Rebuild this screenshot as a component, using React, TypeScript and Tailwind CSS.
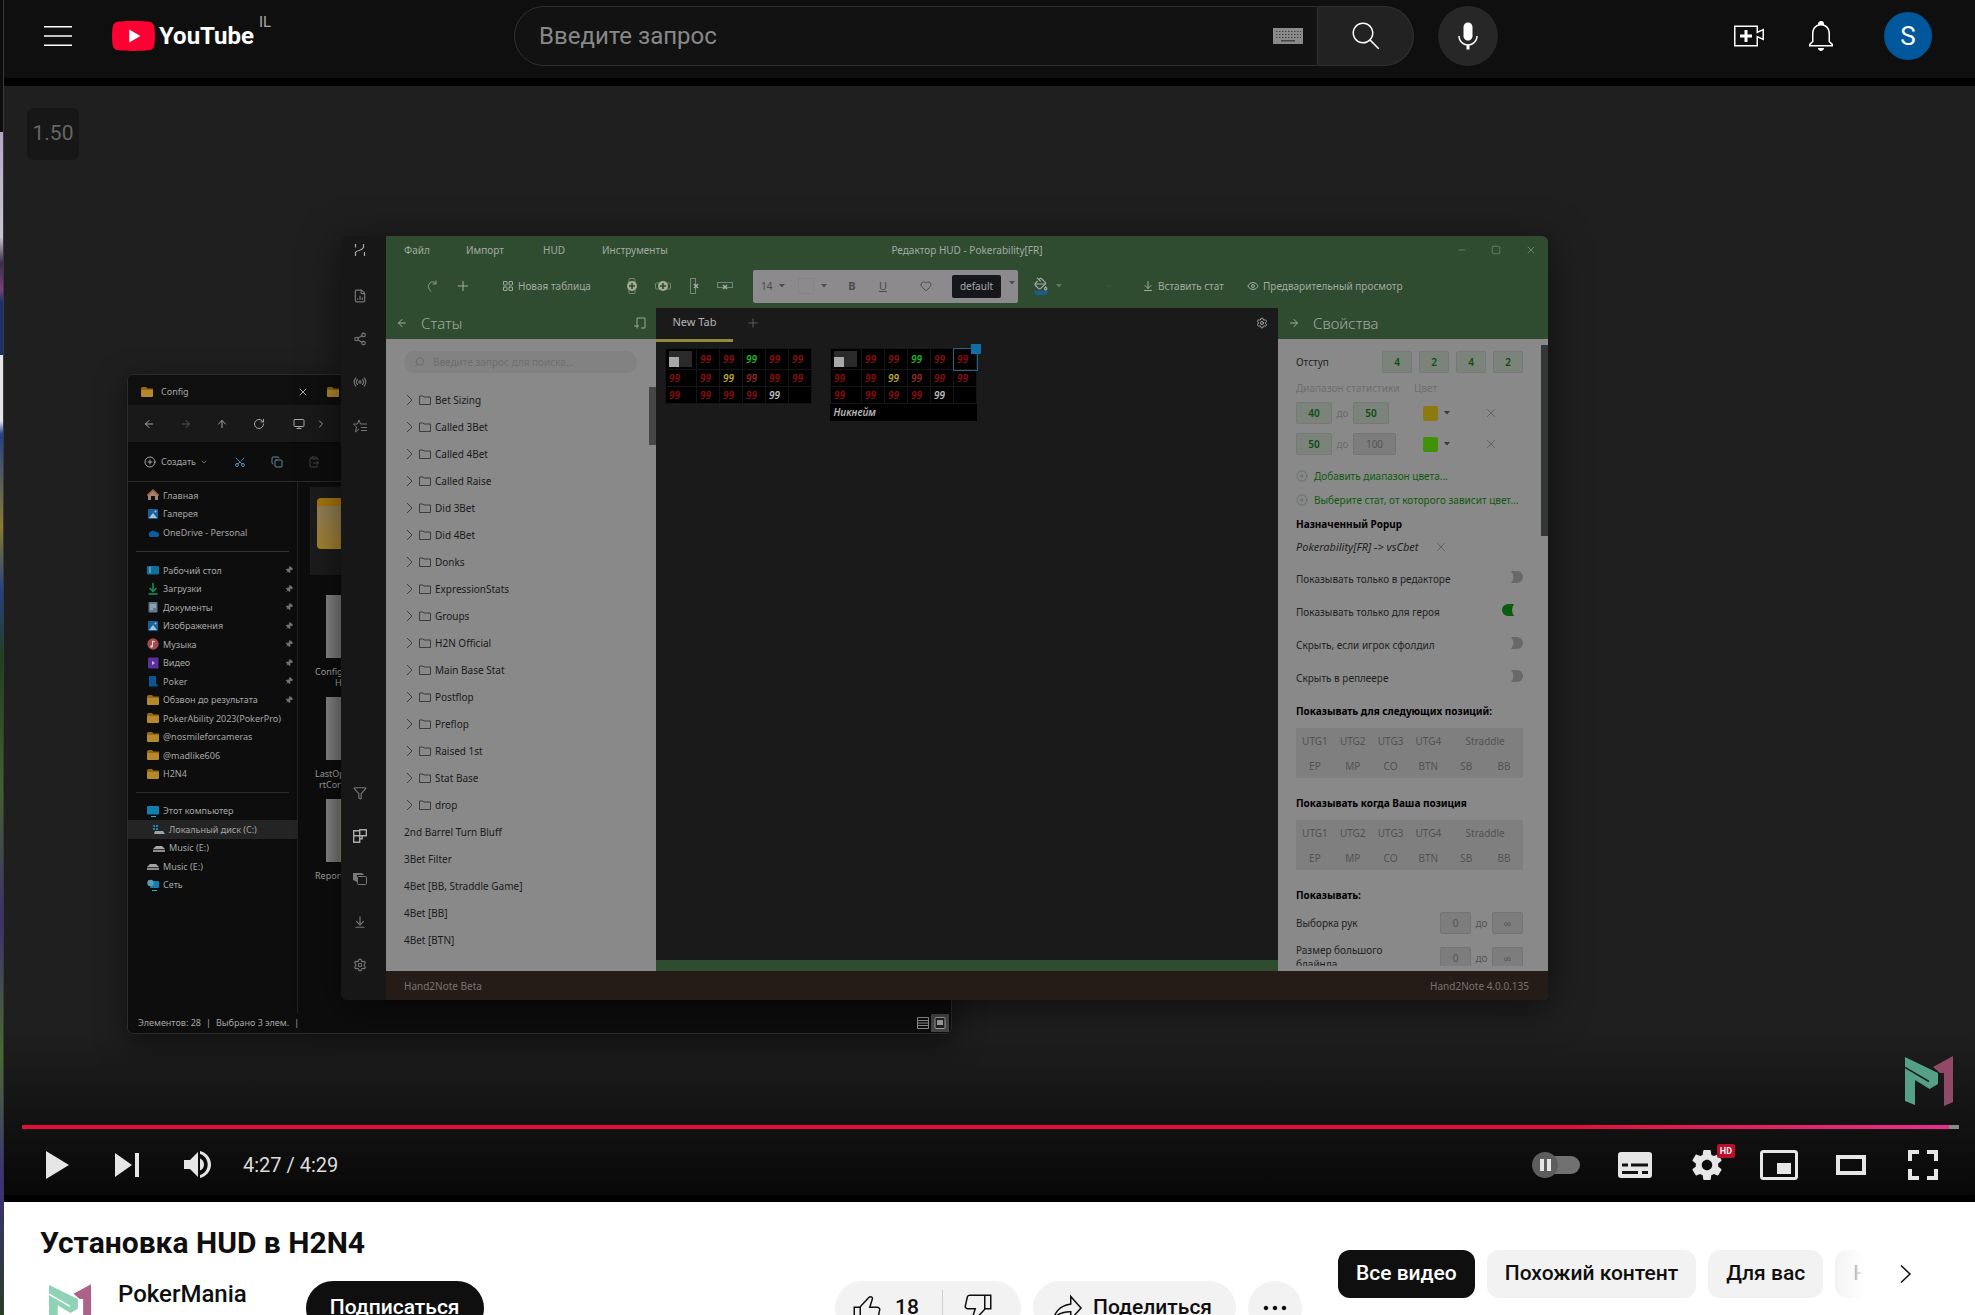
import type { ReactNode } from "react";
import {
  ArrowDownToLine,
  ArrowLeft,
  ArrowRight,
  ArrowUp,
  ChevronDown,
  ChevronRight,
  CirclePlus,
  ClipboardPaste,
  Copy,
  Eye,
  FileChartColumn,
  Funnel,
  Heart,
  LayoutGrid,
  Minus,
  Monitor,
  PaintBucket,
  Pin,
  Plus,
  Radio,
  RotateCw,
  Scissors,
  Search,
  Settings,
  Share2,
  Square,
  X,
} from "lucide-react";

type IconProps = { className?: string };

const YT_PATHS = {
  search:
    "M20.87,20.17l-5.59-5.59C16.35,13.35,17,11.75,17,10c0-3.87-3.13-7-7-7s-7,3.13-7,7s3.13,7,7,7c1.75,0,3.35-0.65,4.58-1.71l5.59,5.59L20.87,20.17z M10,16c-3.31,0-6-2.69-6-6s2.69-6,6-6s6,2.69,6,6S13.31,16,10,16z",
  mic: "M12 3C10.34 3 9 4.37 9 6.07V11.93C9 13.63 10.34 15 12 15C13.66 15 15 13.63 15 11.93V6.07C15 4.37 13.66 3 12 3ZM18.5 12H17.5C17.5 15.03 15.03 17.5 12 17.5C8.97 17.5 6.5 15.03 6.5 12H5.5C5.5 15.24 7.89 17.93 11 18.41V21H13V18.41C16.11 17.93 18.5 15.24 18.5 12Z",
  create:
    "M14,13h-3v3H9v-3H6v-2h3V8h2v3h3V13z M17,6H3v12h14v-6.39l4,1.83V8.56l-4,1.83V6 M18,5v3.83L22,7v8l-4-1.83V19H2V5H18L18,5z",
  bell: "M10,20h4c0,1.1-0.9,2-2,2S10,21.1,10,20z M20,17.35V19H4v-1.65l2-1.88v-5.15c0-2.92,1.56-5.22,4-5.98V3.96c0-1.42,1.49-2.5,2.99-1.76C13.64,2.52,14,3.23,14,3.96l0,0.39c2.44,0.75,4,3.06,4,5.98v5.15L20,17.35z M19,17.77l-2-1.88v-5.47c0-2.47-1.19-4.36-3.13-5.1c-1.26-0.53-2.64-0.5-3.84,0.03C8.15,6.11,7,7.99,7,10.42v5.47l-2,1.88V18h14V17.77z",
  like: "M18.77,11h-4.23l1.52-4.94C16.38,5.03,15.54,4,14.38,4c-0.58,0-1.14,0.24-1.52,0.65L7,11H3v10h4h1h9.43c1.06,0,1.98-0.67,2.19-1.61l1.34-6C21.23,12.15,20.18,11,18.77,11z M7,20H4v-8h3V20z M19.98,13.17l-1.34,6C18.54,19.65,18.03,20,17.43,20H8v-8.61l5.6-6.06C13.79,5.12,14.08,5,14.38,5c0.26,0,0.5,0.11,0.63,0.3c0.07,0.1,0.15,0.26,0.09,0.47l-1.52,4.94L13.18,12h1.35h4.23c0.41,0,0.8,0.17,1.03,0.46C19.92,12.61,20.05,12.86,19.98,13.17z",
  share:
    "M15,5.63L20.66,12L15,18.37V15v-1h-1c-3.96,0-7.14,1-9.75,3.09c1.84-4.07,5.11-6.4,9.89-7.1L15,9.86V9V5.63 M14,3v6C6.22,10.13,3.11,15.33,2,21c2.78-3.97,6.44-6,12-6v6l8-9L14,3L14,3z",
  more: "M7.5,12c0,0.83-0.67,1.5-1.5,1.5S4.5,12.83,4.5,12s0.67-1.5,1.5-1.5S7.5,11.17,7.5,12z M12,10.5c-0.83,0-1.5,0.67-1.5,1.5s0.67,1.5,1.5,1.5s1.5-0.67,1.5-1.5S12.83,10.5,12,10.5z M18,10.5c-0.83,0-1.5,0.67-1.5,1.5s0.67,1.5,1.5,1.5s1.5-0.67,1.5-1.5S18.83,10.5,18,10.5z",
};

function YtIcon({ name, className = "" }: { name: keyof typeof YT_PATHS; className?: string }) {
  return (
    <svg viewBox="0 0 24 24" fill="currentColor" className={`size-9 shrink-0 ${className}`} aria-hidden="true">
      <path d={YT_PATHS[name]} />
    </svg>
  );
}

function PokerManiaLogo({ green, purple, gap, className = "" }: { green: string; purple: string; gap: string; className?: string }) {
  return (
    <svg viewBox="0 0 48 50" className={className} aria-hidden="true">
      <path d="M0 1 33 17V28L24.500 33 10 24V49L0 45Z" fill={green} />
      <path d="M0 11.500 24 25.500" stroke={gap} strokeWidth="1.500" fill="none" />
      <path d="M48 0V46L39 50V17H35L28 11Z" fill={purple} />
    </svg>
  );
}

/* ---------- Header ---------- */

function Header() {
  return (
    <header className="flex h-[78px] items-center bg-[#0f0f0f] pb-[6px] text-white">
      <div className="flex w-[510px] items-center pl-9">
        <button type="button" aria-label="Меню" className="grid size-9 place-items-center">
          <svg viewBox="0 0 28 20" className="h-5 w-7" fill="white" aria-hidden="true">
            <path d="M0 0h28v1.500H0zM0 9.250h28v1.500H0zM0 18.500h28V20H0z" />
          </svg>
        </button>
        <a href="#" aria-label="YouTube" className="ml-9 flex items-center gap-1">
          <svg viewBox="0 0 28.570 20" className="h-[30px] w-[43px]" aria-hidden="true">
            <path
              fill="#ff0033"
              d="M27.970 3.120C27.640 1.890 26.680 .93 25.450 .6 23.220 0 14.290 0 14.290 0S5.350 0 3.120 .6C1.890 .93 .93 1.890 .6 3.120 0 5.350 0 10 0 10s0 4.650 .6 6.880c.33 1.230 1.290 2.190 2.520 2.520C5.350 20 14.290 20 14.290 20s8.930 0 11.160-.6c1.230-.33 2.190-1.290 2.520-2.520C28.570 14.650 28.570 10 28.570 10s0-4.650-.6-6.880z"
            />
            <path fill="white" d="M11.430 14.290 18.850 10l-7.420-4.280z" />
          </svg>
          <span className="text-2xl leading-8 font-bold">YouTube</span>
          <span className="mb-7 ml-px text-[15px] leading-4 text-[#aaa]">IL</span>
        </a>
      </div>

      <form className="flex min-w-0 flex-1 items-center">
        <div className="flex h-[60px] min-w-0 flex-1 items-center rounded-l-full border border-[#303030] bg-[#121212] pr-[14px] pl-6">
          <input
            type="text"
            aria-label="Введите запрос"
            placeholder="Введите запрос"
            className="min-w-0 flex-1 bg-transparent text-2xl text-white outline-none placeholder:text-[#888]"
          />
          <svg viewBox="0 0 30 16" className="h-4 w-[30px]" aria-hidden="true">
            <path fill="#8a8a8a" d="M0 0h30v16H0z" />
            <path stroke="#444" strokeWidth="1" strokeDasharray="1.500 1.500" d="M3 3.500h25M3 6.500h25M3 9.500h25" />
            <path fill="#444" d="M8 12h14v1.500H8z" />
          </svg>
        </div>
        <button
          type="button"
          aria-label="Поиск"
          className="grid h-[60px] w-24 place-items-center rounded-r-full border border-l-0 border-[#303030] bg-[#222]"
        >
          <YtIcon name="search" />
        </button>
        <button type="button" aria-label="Голосовой поиск" className="ml-6 grid size-[60px] place-items-center rounded-full bg-[#272727]">
          <YtIcon name="mic" />
        </button>
      </form>

      <div className="flex w-[477px] items-center justify-end pr-[43px]">
        <button type="button" aria-label="Создать" className="mr-9">
          <YtIcon name="create" />
        </button>
        <button type="button" aria-label="Уведомления" className="mr-[45px]">
          <YtIcon name="bell" />
        </button>
        <button type="button" className="size-12 rounded-full bg-[#01579b] text-[26px] leading-none">
          S
        </button>
      </div>
    </header>
  );
}

/* ---------- Explorer window ---------- */

const QUICK_ITEMS = [
  { label: "Главная", icon: "home" },
  { label: "Галерея", icon: "picture" },
  { label: "OneDrive - Personal", icon: "cloud" },
];

const PINNED_ITEMS = [
  { label: "Рабочий стол", icon: "desktop", pinned: true },
  { label: "Загрузки", icon: "download", pinned: true },
  { label: "Документы", icon: "doc", pinned: true },
  { label: "Изображения", icon: "picture", pinned: true },
  { label: "Музыка", icon: "music", pinned: true },
  { label: "Видео", icon: "video", pinned: true },
  { label: "Poker", icon: "book", pinned: true },
  { label: "Обзвон до результата", icon: "folder", pinned: true },
  { label: "PokerAbility 2023(PokerPro)", icon: "folder" },
  { label: "@nosmileforcameras", icon: "folder" },
  { label: "@madlike606", icon: "folder" },
  { label: "H2N4", icon: "folder" },
];

const DRIVE_ITEMS = [
  { label: "Этот компьютер", icon: "pc" },
  { label: "Локальный диск (C:)", icon: "system", nested: true, active: true },
  { label: "Music (E:)", icon: "drive", nested: true },
  { label: "Music (E:)", icon: "drive" },
  { label: "Сеть", icon: "network" },
];

const EXPLORER_ICONS: Record<string, ReactNode> = {
  home: (
    <>
      <path d="M1 6 6 1l5 5v5H8V7H4v4H1z" fill="#9b8577" />
      <path d="M0 6.500 6 1l6 5.500" stroke="#a85a35" strokeWidth="1.500" fill="none" />
    </>
  ),
  picture: (
    <>
      <rect x="1" y="1" width="10" height="10" rx="1" fill="#1463a0" />
      <path d="M2 10 6 5l4 5z" fill="#a9c4d8" />
      <circle cx="8.500" cy="3.500" r="1" fill="#a9c4d8" />
    </>
  ),
  cloud: <path d="M3 10a3 3 0 0 1 0-5 4 4 0 0 1 6 0 2.500 2.500 0 0 1 1 5z" fill="#0c5aa0" />,
  desktop: (
    <>
      <rect y="2" width="12" height="8.500" rx="1" fill="#116f9c" />
      <path d="M2 4h2M2 6h2M2 8h2" stroke="#8fc4da" />
    </>
  ),
  download: <path d="M6 0v8M2.500 5 6 8.500 9.500 5M1.500 11h9" stroke="#17935f" strokeWidth="1.500" fill="none" />,
  doc: (
    <>
      <rect x="1.500" y="1" width="9" height="10.500" rx="1" fill="#5f7b90" />
      <path d="M3 4h6M3 6h6M3 8h3" stroke="#c0ccd4" />
    </>
  ),
  music: (
    <>
      <circle cx="6" cy="6" r="5.700" fill="#a34b4b" />
      <path d="M5.500 8.500V3l2.500 1" stroke="#ddd" fill="none" />
      <circle cx="4.500" cy="8.500" r="1.200" fill="#ddd" />
    </>
  ),
  video: (
    <>
      <rect x="1" y="0.500" width="10.500" height="11" rx="1" fill="#5c2f9c" />
      <path d="M5 4v4l3-2z" fill="#cbb6e6" />
    </>
  ),
  book: <path d="M2 1h7v8h1.500v2.500H2z" fill="#0a5594" />,
  folder: (
    <>
      <path d="M0 2.500Q0 1 1.500 1H5l1.500 1.500H12V10H0z" fill="#94690f" />
      <rect y="4" width="12" height="7" rx="1" fill="#b5892b" />
    </>
  ),
  pc: (
    <>
      <rect y="1" width="12" height="8.500" rx="1" fill="#117fb0" />
      <path d="M4 11.500h5" stroke="#4aa3c8" />
    </>
  ),
  system: (
    <>
      <path d="M0 1h2v2H0zM3 1h2v2H3zM0 4h2v2H0zM3 4h2v2H3z" fill="#1583bd" />
      <path d="M2 7h8l2 3H1z" fill="#9aa5aa" />
    </>
  ),
  drive: (
    <>
      <path d="M3 4h6l3 3H0z" fill="#a5a5a5" />
      <path d="M0 7.700h12V10H0z" fill="#8a8a8a" />
    </>
  ),
  network: (
    <>
      <rect x="3" y="2" width="9" height="7" rx="1" fill="#117fb0" />
      <circle cx="3.500" cy="4" r="3.200" fill="#5b9bb8" />
      <path d="M5 11.500h5" stroke="#4aa3c8" />
    </>
  ),
};

function ExplorerIcon({ name }: { name: string }) {
  return (
    <svg viewBox="0 0 12 12" className="size-3 shrink-0" aria-hidden="true">
      {EXPLORER_ICONS[name]}
    </svg>
  );
}

type ExplorerItem = { label: string; icon: string; pinned?: boolean; nested?: boolean; active?: boolean };

function ExplorerList({ items, className }: { items: ExplorerItem[]; className: string }) {
  return (
    <ul className={`grid auto-rows-fr ${className}`}>
      {items.map((item, index) => (
        <li
          key={index}
          className={`flex items-center gap-1 pr-1 ${item.nested ? "pl-[25px]" : "pl-[19px]"} ${item.active ? "bg-[#242424]" : ""}`}
        >
          <ExplorerIcon name={item.icon} />
          <span className="flex-1 whitespace-nowrap">{item.label}</span>
          {item.pinned ? <Pin className="size-2 rotate-45 fill-[#777] text-[#777]" /> : null}
        </li>
      ))}
    </ul>
  );
}

function FilePreview({ label, rest, marked }: { label: string; rest?: ReactNode; marked?: boolean }) {
  return (
    <div className="flex h-[102px] flex-col pl-[15px]">
      <div className={`ml-[11px] h-[63px] w-4 bg-gradient-to-r from-[#8a8a8a] to-[#777] ${marked ? "border-r-2 border-[#8f9a3c]" : ""}`} />
      <span className="pt-2 leading-[11px]">{label}</span>
      {rest}
    </div>
  );
}

function ExplorerWindow() {
  return (
    <section className="absolute top-[288px] left-[123px] flex h-[660px] w-[825px] flex-col overflow-hidden rounded-md border border-[#2c2c2c] bg-[#0d0d0d] text-[9px] text-[#a6a6a6] shadow-[0_8px_30px_rgba(0,0,0,0.5)]">
      <div className="flex h-[30px] items-center bg-[#0f0f0f] pt-1 pl-[13px]">
        <ExplorerIcon name="folder" />
        <span className="ml-2 w-[136px] text-[9px]">Config</span>
        <X className="mr-[18px] size-3" />
        <ExplorerIcon name="folder" />
      </div>
      <div className="flex h-[37px] items-center bg-[#191919] pl-[15px]">
        <ArrowLeft className="mr-[25px] size-3" />
        <ArrowRight className="mr-6 size-3 text-[#555]" />
        <ArrowUp className="mr-[25px] size-3" />
        <RotateCw className="mr-7 size-3" />
        <Monitor className="mr-2.5 size-3" />
        <ChevronRight className="size-3" />
      </div>
      <div className="flex h-10 items-center border-t border-b border-[#2a2a2a] border-t-[#0a0a0a] pl-4">
        <CirclePlus className="size-3" />
        <span className="ml-[5px]">Создать</span>
        <ChevronDown className="mr-[26px] ml-1 size-2" />
        <Scissors className="mr-[25px] size-3 -rotate-90 text-[#5f87a5]" />
        <Copy className="mr-[25px] size-3 text-[#5f87a5]" />
        <ClipboardPaste className="size-3 text-[#444]" />
      </div>
      <div className="flex min-h-0 flex-1">
        <div className="w-[170px] border-r border-[#222] pt-1">
          <ExplorerList items={QUICK_ITEMS} className="h-14" />
          <hr className="mx-2 my-[9px] border-[#333]" />
          <ExplorerList items={PINNED_ITEMS} className="h-[222px]" />
          <hr className="mx-2 my-[9px] border-[#2c2c2c]" />
          <ExplorerList items={DRIVE_ITEMS} className="h-[92px]" />
        </div>
        <div className="pl-[12px]">
          <div className="mt-[5px] mb-5 h-[88px] w-20 bg-[#1c1c1c] pt-[11px] pl-[7px]">
            <div className="h-[51px] w-14 rounded-sm border-t-8 border-[#a8780f] bg-gradient-to-b from-[#94815a] to-[#a8842a]" />
          </div>
          <div className="-ml-2.5">
            <FilePreview label="Config" rest={<span className="pl-5 leading-[11px]">H</span>} />
            <FilePreview label="LastOp" rest={<span className="pl-1 leading-[11px]">rtCor</span>} />
            <FilePreview label="Report" marked />
          </div>
        </div>
      </div>
      <div className="flex h-5 items-center justify-between pr-0.5 pb-px pl-2.5">
        <p className="flex gap-[5px]">
          <span>Элементов: 28</span>
          <span>|</span>
          <span>Выбрано 3 элем.</span>
          <span>|</span>
        </p>
        <div className="flex items-center gap-0.5">
          <svg viewBox="0 0 12 12" className="size-3" aria-hidden="true">
            <path d="M.5 .5h11v11H.5zM1 3.500h10M1 6h10M1 8.500h10" stroke="#999" fill="none" />
          </svg>
          <svg viewBox="0 0 18 18" className="size-[18px]" aria-hidden="true">
            <rect width="18" height="18" fill="#4a4a4a" />
            <rect x="4" y="3.500" width="10" height="11" rx="1" fill="#222" stroke="#aaa" />
            <rect x="6" y="6" width="6" height="5" fill="#aaa" />
          </svg>
        </div>
      </div>
    </section>
  );
}

/* ---------- HUD editor window ---------- */

const STAT_FOLDERS = [
  "Bet Sizing",
  "Called 3Bet",
  "Called 4Bet",
  "Called Raise",
  "Did 3Bet",
  "Did 4Bet",
  "Donks",
  "ExpressionStats",
  "Groups",
  "H2N Official",
  "Main Base Stat",
  "Postflop",
  "Preflop",
  "Raised 1st",
  "Stat Base",
  "drop",
];

const STATS = ["2nd Barrel Turn Bluff", "3Bet Filter", "4Bet [BB, Straddle Game]", "4Bet [BB]", "4Bet [BTN]"];

const HUD_ROWS = [
  ["", "red", "red", "green", "red", "red"],
  ["red", "red", "yellow", "rose", "red", "red"],
  ["red", "red", "red", "red", "white", ""],
];

const HUD_COLORS: Record<string, string> = {
  "": "",
  red: "text-[#8c0d10]",
  green: "text-[#25b22c]",
  yellow: "text-[#b9a62c]",
  rose: "text-[#93282c]",
  white: "text-[#bdbdbd]",
};

const SWITCHES = [
  { label: "Показывать только в редакторе", on: false },
  { label: "Показывать только для героя", on: true },
  { label: "Скрыть, если игрок сфолдил", on: false },
  { label: "Скрыть в реплеере", on: false },
];

function Caret({ className = "" }: IconProps) {
  return (
    <svg viewBox="0 0 6 4" className={`h-1 w-1.5 shrink-0 ${className}`} fill="currentColor" aria-hidden="true">
      <path d="M0 0h6L3 3.500z" />
    </svg>
  );
}

function EditorSidebar() {
  return (
    <nav className="flex w-[45px] flex-col items-center bg-[#171717] pt-2 pr-[7px] text-[#777]">
      <svg viewBox="0 0 12 12" className="mb-[33px] size-3" fill="none" stroke="#aaa" strokeWidth="1.200" aria-hidden="true">
        <path d="M1.500 0v3.500M1.500 12V8.500Q2 7 5 6.500T9.500 3.500V0M10.500 8v4" />
      </svg>
      <FileChartColumn className="mb-[29px] size-3.5" />
      <Share2 className="mb-[29px] size-3.5" />
      <Radio className="mb-[30px] size-3.5" />
      <svg viewBox="0 0 14 14" className="size-3.5" fill="none" stroke="currentColor" aria-hidden="true">
        <path d="M6 1 4.500 5H.5l3 3-1 5L6 10M6 1l1.500 4H14M8 8.500h6M8 11.500h6" />
      </svg>
      <div className="mt-auto flex flex-col gap-[29px] pb-7">
        <Funnel className="size-3.5" />
        <svg viewBox="0 0 14 14" className="size-3.5" fill="none" stroke="#aaa" strokeWidth="1.400" aria-hidden="true">
          <path d="M.7 1.700h6v5h-6zM6.700 .7h6.600v6H6.700zM.7 6.700h6v6.600h-6zM6.700 6.700h2.500v3H6.700z" />
        </svg>
        <svg viewBox="0 0 14 14" className="size-3.5" aria-hidden="true">
          <path d="M0 1h9l2 2H4v7L0 8z" fill="currentColor" />
          <rect x="4.500" y="4.500" width="9" height="8" rx="1" stroke="currentColor" fill="none" />
        </svg>
        <ArrowDownToLine className="size-3.5" />
        <Settings className="size-3.5" />
      </div>
    </nav>
  );
}

function EditorMenu() {
  return (
    <div className="grid h-7 grid-cols-3 items-center">
      <div className="flex pl-[18px]">
        <button type="button" className="w-[62px] text-left">Файл</button>
        <button type="button" className="w-[77px] text-left">Импорт</button>
        <button type="button" className="w-[59px] text-left">HUD</button>
        <button type="button" className="text-left">Инструменты</button>
      </div>
      <h2 className="text-center">Редактор HUD - Pokerability[FR]</h2>
      <div className="flex justify-end gap-6 pr-[11px] text-[#6a856b]">
        <button type="button" aria-label="Свернуть"><Minus className="size-2.5" /></button>
        <button type="button" aria-label="Развернуть"><Square className="size-2.5" /></button>
        <button type="button" aria-label="Закрыть"><X className="size-3" /></button>
      </div>
    </div>
  );
}

function CellIcon({ tall, add }: { tall: boolean; add: boolean }) {
  return (
    <button type="button" aria-label={add ? "Добавить ячейку" : "Удалить ячейку"} className="grid w-[31px] place-items-center">
      <svg viewBox="0 0 16 16" className="size-4" fill="none" stroke="#6f8a70" aria-hidden="true">
        {add ? (
          <>
            {tall ? <rect x="5" y=".5" width="6" height="15" rx="1" /> : <rect x=".5" y="5" width="15" height="6" rx="1" />}
            <circle cx="8" cy="8" r="5" fill="#a4ab98" stroke="none" />
            <path d="M8 5v6M5 8h6" stroke="#2d4a1e" strokeWidth="1.500" />
          </>
        ) : (
          <>
            {tall ? <rect x="4.500" y=".5" width="5" height="15" /> : <rect x=".5" y="4.500" width="15" height="5" />}
            <path d={tall ? "M8 6l4 4M12 6l-4 4" : "M6 7l4 4M10 7l-4 4"} stroke="#aaa" strokeWidth="1.500" />
          </>
        )}
      </svg>
    </button>
  );
}

function EditorToolbar() {
  return (
    <div className="flex h-11 items-center whitespace-nowrap">
      <button type="button" aria-label="Повторить" className="ml-[30px] grid w-[31px] place-items-center">
        <svg viewBox="0 0 12 12" className="size-3" fill="none" stroke="#8d9b8d" aria-hidden="true">
          <path d="M5 11.500C2 8.500 1.500 5 4 3S8 2 10 3.500M10 .5V4H6.500" />
        </svg>
      </button>
      <button type="button" aria-label="Добавить" className="grid w-[31px] place-items-center">
        <Plus className="size-4" strokeWidth={1.5} />
      </button>
      <button type="button" className="ml-6 flex w-[114px] items-center gap-1">
        <LayoutGrid className="size-3" />
        Новая таблица
      </button>
      <CellIcon tall add />
      <CellIcon tall={false} add />
      <CellIcon tall add={false} />
      <CellIcon tall={false} add={false} />

      <div className="ml-[13px] flex h-[33px] w-[265px] items-center rounded-xs bg-[#8c8a8c] pl-2 text-[#4c4c4c]">
        <select aria-label="Размер шрифта" className="w-4 appearance-none bg-transparent text-[10px] outline-none">
          <option>14</option>
        </select>
        <Caret className="ml-0.5" />
        <span className="ml-[13px] h-4 w-4 border border-[#858385]" />
        <Caret className="ml-[7px]" />
        <button type="button" className="ml-[18px] w-3.5 text-[11px] font-bold">B</button>
        <button type="button" className="ml-[17px] w-3.5 text-[11px] underline">U</button>
        <button type="button" aria-label="Символ" className="ml-[30px]">
          <Heart className="size-3" />
        </button>
        <button type="button" className="ml-5 h-[23px] w-[49px] rounded-xs bg-[#16171a] text-[#a9a9a9]">default</button>
        <Caret className="mb-1.5 ml-2" />
      </div>

      <button type="button" aria-label="Заливка" className="ml-4 flex items-center gap-2 text-[#5f7a60]">
        <span className="flex flex-col items-center">
          <PaintBucket className="size-3.5 text-[#aaa]" />
          <span className="h-1 w-3.5 rounded-b-full bg-[#145f8f]" />
        </span>
        <Caret />
      </button>
      <Minus className="ml-11 size-1.5 text-[#4c6a4d]" />
      <button type="button" className="ml-[30px] flex w-[105px] items-center gap-1">
        <ArrowDownToLine className="size-3" />
        Вставить стат
      </button>
      <button type="button" className="flex items-center gap-1">
        <Eye className="size-3" />
        Предварительный просмотр
      </button>
    </div>
  );
}

function StatsPanel() {
  return (
    <div className="flex w-[270px] flex-col">
      <div className="flex h-[31px] items-center pb-0.5 pl-2.5">
        <ArrowLeft className="size-3" />
        <h3 className="ml-[13px] flex-1 text-[15px] font-light">Статы</h3>
        <svg viewBox="0 0 12 12" className="mr-2.5 size-3" fill="none" stroke="#9aa59a" aria-hidden="true">
          <path d="M3 7V1h8v10H7M0 9h5M3 7v4.500" />
        </svg>
      </div>
      <div className="relative flex-1 bg-[#898989] pt-3 pr-[19px] pl-[18px] text-[#1a1a1a]">
        <label className="mb-[13px] flex h-[22px] items-center gap-2 rounded-full bg-[#828282] px-2.5 text-[#686868]">
          <Search className="size-3 -scale-x-100" />
          <input type="text" placeholder="Введите запрос для поиска..." aria-label="Поиск статов" className="w-full bg-transparent outline-none placeholder:text-[#6e6e6e]" />
        </label>
        <ul>
          {STAT_FOLDERS.map((name) => (
            <li key={name} className="flex h-[27px] items-center">
              <svg viewBox="0 0 27 12" className="mr-1 h-3 w-[27px]" fill="none" stroke="#3d3d3d" aria-hidden="true">
                <path d="M3 1l5 5-5 5M15.500 10.500V2h3.500l1 1h6.500v7.500z" />
              </svg>
              {name}
            </li>
          ))}
          {STATS.map((name) => (
            <li key={name} className="flex h-[27px] items-center">{name}</li>
          ))}
        </ul>
        <div className="absolute top-12 right-0 h-[58px] w-[7px] bg-[#464648]" />
      </div>
    </div>
  );
}

function HudTable({ nickname, selected }: { nickname?: string; selected?: boolean }) {
  return (
    <div className="relative">
      <table className="w-[147px] table-fixed border-collapse bg-black text-[10px] leading-3 font-semibold italic">
        <colgroup>
          <col className="w-[31px]" />
        </colgroup>
        <tbody>
          {HUD_ROWS.map((row, rowIndex) => (
            <tr key={rowIndex} className={rowIndex === 0 ? "h-[21px]" : "h-[17px]"}>
              {row.map((color, index) => (
                <td
                  key={index}
                  className={`border border-[#151515] p-0 pl-[3px] ${HUD_COLORS[color]} ${
                    selected && rowIndex === 0 && index === 5 ? "outline outline-[#2a6186]" : ""
                  }`}
                >
                  {color ? "99" : null}
                  {rowIndex === 0 && index === 0 ? (
                    <span className="flex h-4 w-[23px] items-end bg-[#2a2a2a]">
                      <span className="size-2.5 bg-[#a8a8a8]" />
                    </span>
                  ) : null}
                </td>
              ))}
            </tr>
          ))}
          {nickname ? (
            <tr className="h-[17px]">
              <td colSpan={6} className="pl-[3px] text-[#b5b5b5]">{nickname}</td>
            </tr>
          ) : null}
        </tbody>
      </table>
      {selected ? <span className="absolute -top-1 -right-1 size-2.5 bg-[#0f6ea6]" /> : null}
    </div>
  );
}

function Canvas() {
  return (
    <div className="flex min-w-0 flex-1 flex-col pb-[11px]">
      <div className="flex-1 bg-[#1a1a1b]">
        <div className="flex h-[34px] items-center">
          <button type="button" className="h-full w-[77px] border-b-3 border-[#8f8a3d] pb-1 text-[11px] text-[#b5b5b5]">New Tab</button>
          <button type="button" aria-label="Новая вкладка" className="ml-[13px] flex-1 pb-1 text-[#666]">
            <Plus className="size-3.5" strokeWidth={1.5} />
          </button>
          <Settings className="mr-2.5 mb-1 size-3" />
        </div>
        <div className="flex items-start gap-[18px] pt-1.5 pl-[9px]">
          <HudTable />
          <HudTable nickname="Никнейм" selected />
        </div>
      </div>
    </div>
  );
}

function NumberBox({ value, label, width, muted }: { value: string; label: string; width: string; muted?: boolean }) {
  return (
    <input
      type="text"
      defaultValue={value}
      aria-label={label}
      className={`h-[22px] rounded-xs border text-center outline-none ${width} ${
        muted ? "border-[#747474] bg-[#7d7d7d] text-[#555]" : "border-[#75797a] bg-[#7b837b] font-semibold text-[#0b4d12]"
      }`}
    />
  );
}

function PositionGrid() {
  return (
    <div className="grid h-[50px] grid-cols-6 grid-rows-2 items-center bg-[#7f7f7f] text-center text-[#525252]">
      <button type="button">UTG1</button>
      <button type="button">UTG2</button>
      <button type="button">UTG3</button>
      <button type="button">UTG4</button>
      <button type="button" className="col-span-2">Straddle</button>
      <button type="button">EP</button>
      <button type="button">MP</button>
      <button type="button">CO</button>
      <button type="button">BTN</button>
      <button type="button">SB</button>
      <button type="button">BB</button>
    </div>
  );
}

function ColorRange({ from, to, swatch, open }: { from: string; to: string; swatch: string; open?: boolean }) {
  return (
    <div className="mb-[9px] flex items-center">
      <NumberBox value={from} label="От" width="w-9" />
      <span className="w-[21px] text-center text-[#6c6c6c]">до</span>
      <NumberBox value={to} label="До" width={open ? "w-[43px]" : "w-9"} muted={open} />
      <span className={`size-[15px] rounded-xs ${open ? "ml-[27px]" : "ml-[34px]"} ${swatch}`} />
      <Caret className="ml-1.5 text-[#3a3a3a]" />
      <button type="button" aria-label="Удалить диапазон" className="ml-[34px]">
        <X className="size-3.5 text-[#5c5c5c]" strokeWidth={1.5} />
      </button>
    </div>
  );
}

function PropertiesPanel() {
  return (
    <div className="flex w-[270px] flex-col">
      <div className="flex h-[31px] items-center pb-0.5 pl-2.5">
        <ArrowRight className="size-3" />
        <h3 className="ml-[13px] text-[15px] font-light">Свойства</h3>
      </div>
      <div className="relative min-h-0 flex-1 bg-[#898989] pb-[5px] text-[#1f1f1f]">
        <div className="h-[627px] overflow-hidden pt-3 pr-[25px] pl-[18px]">
          <div className="flex items-center gap-[7px]">
            <span className="flex-1">Отступ</span>
            <NumberBox value="4" label="Отступ слева" width="w-[30px]" />
            <NumberBox value="2" label="Отступ сверху" width="w-[30px]" />
            <NumberBox value="4" label="Отступ справа" width="w-[30px]" />
            <NumberBox value="2" label="Отступ снизу" width="w-[30px]" />
          </div>
          <div className="my-2 flex h-[13px] items-center text-[#6e6e6e]">
            <span className="w-[118px]">Диапазон статистики</span>
            <span>Цвет</span>
          </div>
          <ColorRange from="40" to="50" swatch="bg-[#8a7a10]" />
          <ColorRange from="50" to="100" swatch="bg-[#3f9108]" open />
          <button type="button" className="flex h-6 items-center gap-1.5 text-[#0f5a0f]">
            <CirclePlus className="size-3 text-[#5d6b5d]" strokeWidth={1.5} />
            Добавить диапазон цвета...
          </button>
          <button type="button" className="flex h-6 items-center gap-1.5 whitespace-nowrap text-[#0f5a0f]">
            <CirclePlus className="size-3 text-[#5d6b5d]" strokeWidth={1.5} />
            Выберите стат, от которого зависит цвет...
          </button>
          <h4 className="flex h-6 items-center font-bold text-black">Назначенный Popup</h4>
          <div className="flex h-[26px] items-start gap-4 pt-1 text-[11px] italic">
            Pokerability[FR] -&gt; vsCbet
            <X className="size-3.5 text-[#5c5c5c]" strokeWidth={1.5} />
          </div>
          {SWITCHES.map(({ label, on }) => (
            <label key={label} className="flex h-[33px] items-center justify-between">
              {label}
              <input type="checkbox" defaultChecked={on} className="sr-only" />
              <svg viewBox="0 0 22 12" className="mb-1 h-3 w-[22px]" aria-hidden="true">
                {on ? <path d="M13 0H7a6 6 0 0 0 0 12h6q-4-6 0-12z" fill="#0a5c0e" /> : <path d="M10 0h6a6 6 0 0 1 0 12h-6q5-6 0-12z" fill="#686868" />}
              </svg>
            </label>
          ))}
          <h4 className="flex h-[34px] items-center font-bold text-black">Показывать для следующих позиций:</h4>
          <PositionGrid />
          <h4 className="mt-2 flex h-[34px] items-center font-bold text-black">Показывать когда Ваша позиция</h4>
          <PositionGrid />
          <h4 className="mt-2 flex h-[34px] items-center font-bold text-black">Показывать:</h4>
          <div className="flex items-center">
            <span className="flex-1">Выборка рук</span>
            <NumberBox value="0" label="Выборка от" width="w-[31px]" muted />
            <span className="w-[21px] text-center text-[#555]">до</span>
            <NumberBox value="∞" label="Выборка до" width="w-[31px]" muted />
          </div>
          <div className="mt-[9px] flex items-start">
            <span className="flex-1 pr-8">Размер большого блайнда</span>
            <div className="flex items-center pt-1">
              <NumberBox value="0" label="Блайнд от" width="w-[31px]" muted />
              <span className="w-[21px] text-center text-[#555]">до</span>
              <NumberBox value="∞" label="Блайнд до" width="w-[31px]" muted />
            </div>
          </div>
        </div>
        <div className="absolute top-1.5 right-0 h-[191px] w-[7px] bg-[#343637]" />
      </div>
    </div>
  );
}

function EditorWindow() {
  return (
    <section className="absolute top-[150px] left-[337px] flex h-[764px] w-[1207px] overflow-hidden rounded-md text-[10px] leading-[14px] text-[#a3aaa3] shadow-[0_8px_40px_rgba(0,0,0,0.55)]">
      <EditorSidebar />
      <div className="flex min-w-0 flex-1 flex-col bg-[#2f4c30]">
        <EditorMenu />
        <EditorToolbar />
        <div className="flex min-h-0 flex-1">
          <StatsPanel />
          <Canvas />
          <PropertiesPanel />
        </div>
        <div className="flex h-[29px] items-center justify-between bg-[#261c17] pr-[19px] pl-[18px] text-[#7a726e]">
          <span>Hand2Note Beta</span>
          <span>Hand2Note 4.0.0.135</span>
        </div>
      </div>
    </section>
  );
}

/* ---------- Player ---------- */

function PlayerButton({ label, width = "w-[72px]", children }: { label: string; width?: string; children: ReactNode }) {
  return (
    <button type="button" aria-label={label} className={`relative grid h-[60px] place-items-center ${width}`}>
      {children}
    </button>
  );
}

function PlayerControls() {
  return (
    <div className="absolute inset-x-0 bottom-0 bg-gradient-to-t from-[#080808] to-transparent pt-24 pr-4 pl-[18px]">
      <input
        type="range"
        aria-label="Прокрутка видео"
        min={0}
        max={269}
        defaultValue={267}
        className="block h-1 w-full appearance-none bg-[linear-gradient(to_right,#e1103a_80%,#e6308a_99.500%,#8a8a8a_99.500%)] [&::-webkit-slider-thumb]:size-0 [&::-webkit-slider-thumb]:appearance-none"
      />
      <div className="flex h-[66px] items-center pt-1.5 text-[#e6e6e6]">
        <PlayerButton label="Смотреть" width="w-[70px]">
          <svg viewBox="0 0 23 28" className="h-7 w-[23px]" fill="currentColor" aria-hidden="true">
            <path d="M0 0 23 14 0 28z" />
          </svg>
        </PlayerButton>
        <PlayerButton label="Следующее" width="w-[70px]">
          <svg viewBox="0 0 24 24" className="size-6" fill="currentColor" aria-hidden="true">
            <path d="M0 0 17 12 0 24zM20 0h4v24h-4z" />
          </svg>
        </PlayerButton>
        <PlayerButton label="Звук" width="w-[70px]">
          <svg viewBox="0 0 27 27" className="size-[27px]" fill="currentColor" aria-hidden="true">
            <path d="M0 9v9h6l8 8V1L6 9zM16 7.500v12c2.500-1 4-3.300 4-6s-1.500-5-4-6zM16 0v3c4.500 1.300 7.700 5.500 7.700 10.500S20.500 22.700 16 24v3c6.200-1.400 11-7 11-13.500S22.200 1.400 16 0z" />
          </svg>
        </PlayerButton>
        <span className="ml-[11px] flex-1 text-[20px] text-[#ddd]">4:27 / 4:29</span>
        <label className="mr-[19px] block">
          <input type="checkbox" aria-label="Автовоспроизведение" className="sr-only" />
          <svg viewBox="0 0 48 26" className="h-[26px] w-12" aria-hidden="true">
            <rect x="10" y="4" width="38" height="18" rx="9" fill="#717171" />
            <circle cx="13" cy="13" r="13" fill="#5d5d5d" />
            <path d="M8 7h4v12H8zM15 7h4v12h-4z" fill="#e6e6e6" />
          </svg>
        </label>
        <PlayerButton label="Субтитры">
          <svg viewBox="0 0 34 26" className="h-[26px] w-[34px]" aria-hidden="true">
            <rect width="34" height="26" rx="3" fill="currentColor" />
            <path d="M4 11.500h6v3H4zM13 11.500h17v3H13zM4 19h16v3H4zM24 19h6v3h-6z" fill="#111" />
          </svg>
        </PlayerButton>
        <PlayerButton label="Настройки">
          <svg viewBox="10 10 16 16" className="size-[30px]" fill="currentColor" aria-hidden="true">
            <path d="m23.940 18.780c.03-.25.05-.51.05-.78 0-.27-.02-.52-.05-.78l1.680-1.320c.15-.12.19-.33.09-.51l-1.600-2.760c-.09-.17-.31-.24-.48-.17l-1.990.8c-.41-.32-.86-.58-1.350-.78l-.3-2.120c-.02-.19-.19-.33-.39-.33l-3.200 0c-.2 0-.36.14-.39.33l-.3 2.120c-.48.2-.93.47-1.350.78l-1.990-.8c-.18-.07-.39 0-.48.17l-1.600 2.760c-.1.17-.05.39.09.51l1.680 1.320c-.03.25-.05.52-.05.78 0 .26.02.52.05.78l-1.680 1.320c-.15.12-.19.33-.09.51l1.600 2.760c.09.17.31.24.48.17l1.990-.8c.41.32.86.58 1.350.78l.3 2.120c.02.19.19.33.39.33l3.200 0c.2 0 .36-.14.39-.33l.3-2.120c.48-.2.93-.47 1.350-.78l1.990.8c.18.07.39 0 .48-.17l1.600-2.760c.09-.17.05-.39-.09-.51l-1.680-1.320zm-5.940 2.010c-1.540 0-2.800-1.250-2.800-2.800 0-1.540 1.250-2.800 2.800-2.800 1.540 0 2.800 1.250 2.800 2.800 0 1.540-1.250 2.800-2.800 2.800z" />
          </svg>
          <span className="absolute top-[9px] right-2 rounded-xs bg-[#b8102c] px-[3px] text-[9px] leading-[14px] font-bold text-[#eee]">HD</span>
        </PlayerButton>
        <PlayerButton label="Мини-проигрыватель">
          <svg viewBox="0 0 38 30" className="h-[30px] w-[38px]" aria-hidden="true">
            <rect x="1.500" y="1.500" width="35" height="27" rx="2" fill="none" stroke="currentColor" strokeWidth="3" />
            <path d="M17 13h14v11H17z" fill="currentColor" />
          </svg>
        </PlayerButton>
        <PlayerButton label="Широкий экран">
          <svg viewBox="0 0 30 20" className="h-5 w-[30px]" fill="none" stroke="currentColor" strokeWidth="4" aria-hidden="true">
            <path d="M2 2h26v16H2z" />
          </svg>
        </PlayerButton>
        <PlayerButton label="Во весь экран">
          <svg viewBox="0 0 30 30" className="size-[30px]" fill="none" stroke="currentColor" strokeWidth="4" aria-hidden="true">
            <path d="M2 11V2h9M19 2h9v9M28 19v9h-9M11 28H2v-9" />
          </svg>
        </PlayerButton>
      </div>
    </div>
  );
}

function Player() {
  return (
    <section className="border-t-8 border-b-7 border-black">
      <div className="relative aspect-video w-full overflow-hidden bg-[#1f1f1f]">
        <span className="absolute top-[22px] left-[23px] grid h-[52px] w-[52px] place-items-center rounded-md bg-[#171717] text-[21px] text-[#666]">
          1.50
        </span>
        <div className="font-['Noto_Sans',sans-serif]">
          <ExplorerWindow />
          <EditorWindow />
        </div>
        <PlayerControls />
        <PokerManiaLogo green="#55a188" purple="#904a68" gap="#1c1c1c" className="absolute right-[22px] bottom-[89px] h-[50px] w-12" />
      </div>
    </section>
  );
}

/* ---------- Below the player ---------- */

function VideoInfo() {
  return (
    <div className="min-w-0 flex-1">
      <h1 className="text-[30px] leading-[42px] font-bold">Установка HUD в H2N4</h1>
      <div className="mt-3 flex items-start">
        <a href="#" className="grid size-[60px] place-items-center">
          <PokerManiaLogo green="#8fd3b6" purple="#ad6389" gap="#ffffff" className="h-11 w-[42px]" />
        </a>
        <a href="#" className="ml-[18px] text-2xl leading-9 font-medium">PokerMania</a>
        <button type="button" className="mt-[5px] ml-[59px] h-[54px] rounded-full bg-[#0f0f0f] px-6 text-[21px] font-medium text-white">
          Подписаться
        </button>
        <div className="mt-[5px] ml-auto flex gap-3 text-[21px] font-medium">
          <div className="flex h-[54px] items-center rounded-full bg-[#f2f2f2]">
            <button type="button" className="flex h-full w-[107px] items-center gap-2.5 pl-[14px]">
              <YtIcon name="like" />
              18
            </button>
            <span className="h-9 w-px bg-[#d0d0d0]" />
            <button type="button" aria-label="Не нравится" className="grid h-full w-[78px] place-items-center pr-2">
              <YtIcon name="like" className="rotate-180" />
            </button>
          </div>
          <button type="button" className="flex h-[54px] items-center gap-2 rounded-full bg-[#f2f2f2] pr-6 pl-4">
            <YtIcon name="share" />
            Поделиться
          </button>
          <button type="button" aria-label="Ещё" className="grid size-[54px] place-items-center rounded-full bg-[#f2f2f2]">
            <YtIcon name="more" />
          </button>
        </div>
      </div>
    </div>
  );
}

function RelatedChips() {
  return (
    <div className="flex w-[601px] items-center self-start pt-7 text-[21px] font-medium">
      <div className="flex min-w-0 gap-3">
        <button type="button" className="h-12 shrink-0 rounded-xl bg-[#0f0f0f] px-[18px] text-white">Все видео</button>
        <button type="button" className="h-12 shrink-0 rounded-xl bg-[#f2f2f2] px-[18px]">Похожий контент</button>
        <button type="button" className="h-12 shrink-0 rounded-xl bg-[#f2f2f2] px-[18px]">Для вас</button>
        <button
          type="button"
          className="h-12 w-7 shrink-0 overflow-hidden rounded-l-xl bg-[#f2f2f2] mask-r-from-0% pl-[18px] text-left"
        >
          Н
        </button>
      </div>
      <button type="button" aria-label="Далее" className="ml-auto">
        <svg viewBox="0 0 12 18" className="mr-[27px] h-[18px] w-3" fill="none" stroke="#0f0f0f" strokeWidth="1.500" aria-hidden="true">
          <path d="M1 .5 10 9l-9 8.500" />
        </svg>
      </button>
    </div>
  );
}

export default function App() {
  return (
    <div className="flex h-screen overflow-hidden bg-white font-['Roboto',sans-serif] text-[#0f0f0f]">
      {/* sliver of the desktop behind the browser window */}
      <div className="w-1 shrink-0 border-r border-[#3a3a3a] bg-[linear-gradient(#0c0c0c_0%,#0c0c0c_10%,#b3a8c4_10%,#c9c4d2_18%,#3a2c4a_20%,#7a3f7c_22%,#1c2f6b_23%,#1c2f6b_27%,#e5e5ea_27%,#e5e5ea_32%,#26408c_33%,#8a7a2a_40%,#24408a_45%,#20401f_50%,#44602c_60%,#3f2f70_70%,#4a6a2f_80%,#3c2f80_90%,#24401f_100%)]" />
      <div className="min-w-0 flex-1">
        <Header />
        <Player />
        <main className="flex gap-9 pt-5 pr-9 pl-9">
          <VideoInfo />
          <RelatedChips />
        </main>
      </div>
    </div>
  );
}
